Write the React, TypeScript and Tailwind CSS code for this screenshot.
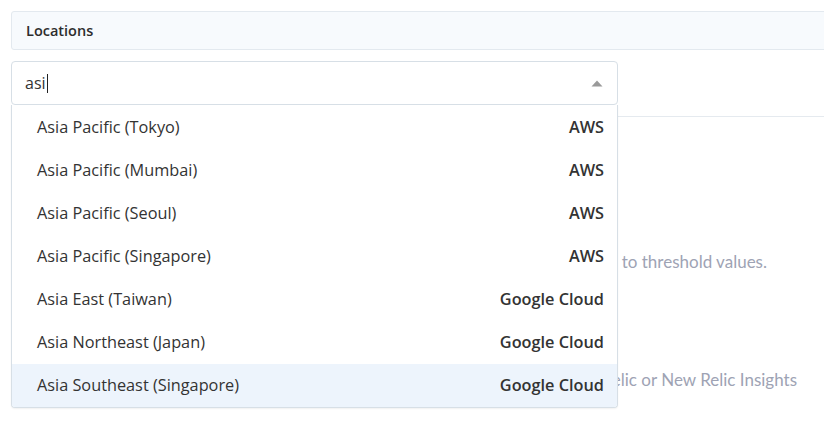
import { useState } from "react";

type Loc = { name: string; provider: string };

const locations: Loc[] = [
  { name: "Asia Pacific (Tokyo)", provider: "AWS" },
  { name: "Asia Pacific (Mumbai)", provider: "AWS" },
  { name: "Asia Pacific (Seoul)", provider: "AWS" },
  { name: "Asia Pacific (Singapore)", provider: "AWS" },
  { name: "Asia East (Taiwan)", provider: "Google Cloud" },
  { name: "Asia Northeast (Japan)", provider: "Google Cloud" },
  { name: "Asia Southeast (Singapore)", provider: "Google Cloud" },
];

export default function App() {
  const [active, setActive] = useState(6);

  return (
    <div className="relative w-[824px] h-[440px] overflow-hidden bg-white pt-[11px] pl-[11px] font-['Open_Sans',sans-serif] text-[#333]">
      <div className="h-[39px] -mr-[20px] flex items-center px-[14px] bg-[#f7fafd] border border-[#e3e9ef] rounded-l-[3px]">
        <span className="text-[14.5px] font-semibold text-[#2d2d2d]">Locations</span>
      </div>

      <div className="relative mt-[11px]">
        <div className="w-[607px] h-[44px] flex items-center justify-between pl-[13px] pr-[14px] border border-[#d7dfe6] rounded-[4px] bg-white">
          <span className="flex items-center text-[16px] text-[#333]">
            asi
            <span className="ml-[1px] w-px h-[19px] bg-[#222]" />
          </span>
          <svg width="12" height="7" viewBox="0 0 12 7">
            <path d="M6 0.5 L11.5 6.5 L0.5 6.5 Z" fill="#9a9a9a" />
          </svg>
        </div>

        <div className="-mr-[20px] mt-[11px] border-t border-[#e5eaef] pt-[132px] font-['Lato',sans-serif] text-[17px] text-[#9ea3b4]">
          <p className="w-[756px] text-right">Alerts are triggered when results are compared to threshold values.</p>
          <p className="mt-[92px] w-[786px] text-right">Send results to New Relic or New Relic Insights</p>
        </div>

        <ul className="absolute left-0 top-[44px] w-[607px] pt-[1px] bg-white border border-t-0 border-[#d7dfe6] rounded-b-[4px] shadow-[0_1px_2px_rgba(0,0,0,0.06)] overflow-hidden">
          {locations.map((loc, i) => (
            <li
              key={loc.name}
              onMouseEnter={() => setActive(i)}
              className={
                "h-[43px] flex items-center justify-between pl-[25px] pr-[13px] text-[16.3px] " +
                (i === active ? "bg-[#edf4fc]" : "bg-white")
              }
            >
              <span className="text-[#333]">{loc.name}</span>
              <span className="font-semibold text-[#333]">{loc.provider}</span>
            </li>
          ))}
        </ul>
      </div>
    </div>
  );
}
